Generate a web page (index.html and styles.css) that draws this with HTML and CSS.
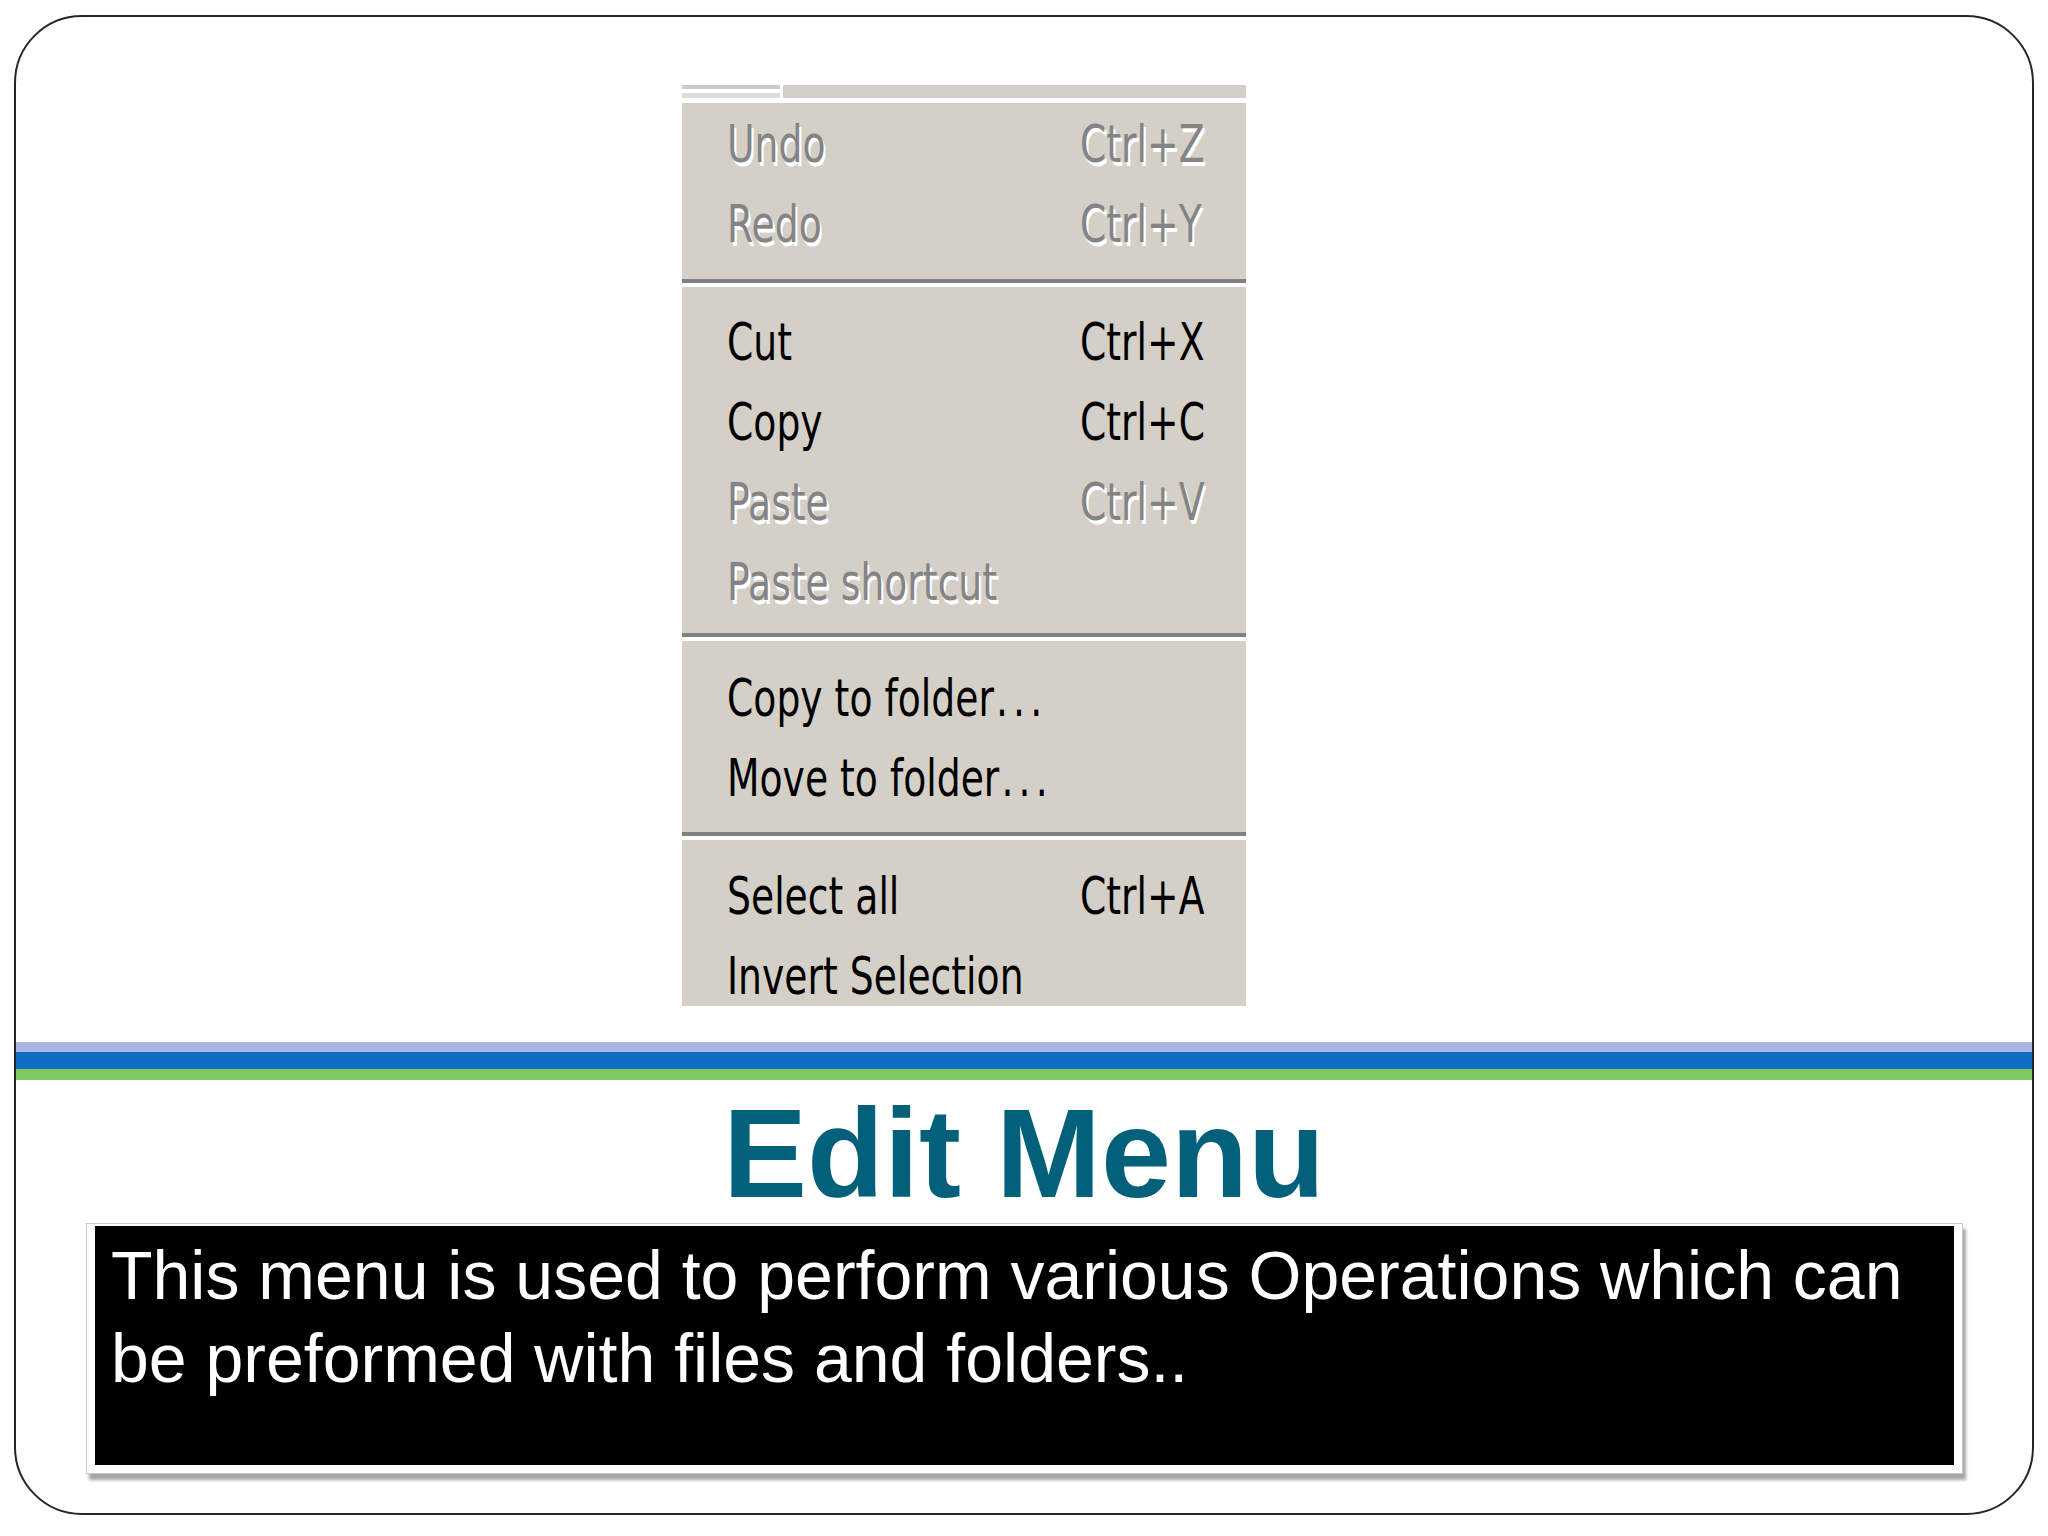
FILE: index.html
```html
<!DOCTYPE html>
<html lang="en">
<head>
<meta charset="utf-8">
<title>Edit Menu</title>
<link rel="stylesheet" href="styles.css">
</head>
<body>
<div class="slide">
  <div class="menu">
    <div class="menubar"><div class="menubar-tab"></div></div>
    <div class="group g1">
      <div class="row disabled"><span class="lbl">Undo</span><span class="key">Ctrl+Z</span></div>
      <div class="row disabled"><span class="lbl">Redo</span><span class="key">Ctrl+Y</span></div>
    </div>
    <div class="sep"></div>
    <div class="group g2">
      <div class="row"><span class="lbl">Cut</span><span class="key">Ctrl+X</span></div>
      <div class="row"><span class="lbl">Copy</span><span class="key">Ctrl+C</span></div>
      <div class="row disabled"><span class="lbl">Paste</span><span class="key">Ctrl+V</span></div>
      <div class="row disabled"><span class="lbl">Paste shortcut</span><span class="key"></span></div>
    </div>
    <div class="sep"></div>
    <div class="group g3">
      <div class="row"><span class="lbl">Copy to folder<span class="dots">...</span></span><span class="key"></span></div>
      <div class="row"><span class="lbl">Move to folder<span class="dots">...</span></span><span class="key"></span></div>
    </div>
    <div class="sep"></div>
    <div class="group g4">
      <div class="row"><span class="lbl">Select all</span><span class="key">Ctrl+A</span></div>
      <div class="row"><span class="lbl">Invert Selection</span><span class="key"></span></div>
    </div>
  </div>
  <div class="stripes">
    <div class="stripe s1"></div>
    <div class="stripe s2"></div>
    <div class="stripe s3"></div>
  </div>
  <h1 class="title">Edit Menu</h1>
  <div class="frame">
    <div class="box">This menu is used to perform various Operations which can be preformed with files and folders..</div>
  </div>
</div>
</body>
</html>
```

FILE: styles.css
```css
html, body {
  margin: 0;
  padding: 0;
  background: #ffffff;
}

body {
  width: 2048px;
  height: 1536px;
  overflow: hidden;
  font-family: "Liberation Sans", Arial, sans-serif;
}

.slide {
  box-sizing: border-box;
  width: 2020px;
  height: 1500px;
  margin: 15px 0 0 14px;
  border: 2px solid #262626;
  border-radius: 68px;
  overflow: hidden;
  display: flex;
  flex-direction: column;
  background: #ffffff;
}

/* ---------- Windows-style menu ---------- */
.menu {
  width: 564px;
  margin: 68px 0 0 666px;
  background: #d4d0c8;
  font-family: "DejaVu Sans", "Liberation Sans", sans-serif;
  font-size: 52px;
}

.menubar {
  height: 13px;
  background: #d4d0c8;
  border-bottom: 5px solid #ffffff;
  display: flex;
}

.menubar-tab {
  width: 98px;
  height: 13px;
  border-right: 3px solid #ffffff;
  background: linear-gradient(to bottom,
    #cbcbcb 0, #cbcbcb 4px,
    #ffffff 4px, #ffffff 8px,
    #dcdcdc 8px, #dcdcdc 13px);
}

.group {
  box-sizing: border-box;
  padding-left: 45px;
  overflow: hidden;
}

.g1 { padding-top: 1px; padding-bottom: 15px; }
.g2 { padding-top: 15px; padding-bottom: 11px; }
.g3 { padding-top: 17px; padding-bottom: 14px; }
.g4 { padding-top: 16px; height: 166px; }

.row {
  display: grid;
  grid-template-columns: 353px 1fr;
  height: 80px;
  line-height: 80px;
  color: #000000;
  white-space: nowrap;
}

.lbl, .key {
  display: inline-block;
  transform: scaleX(0.725);
  transform-origin: left center;
}

.dots {
  margin-left: 3px;
  letter-spacing: 7px;
}

.row.disabled {
  color: #848484;
  text-shadow: 3px 4px 0 #ffffff;
}

.sep {
  height: 0;
  border-top: 4px solid #808080;
  border-bottom: 4px solid #ffffff;
}

/* ---------- stripes ---------- */
.stripes {
  margin-top: 36px;
  display: flex;
  flex-direction: column;
}

.stripe { height: 10px; }
.s1 { background: #abb5e1; height: 10px; }
.s2 { background: #0f6dc6; height: 17px; }
.s3 { background: #7dc95f; height: 11px; }

/* ---------- title ---------- */
.title {
  margin: 5px 0 0 0;
  font-family: "Liberation Sans", Arial, sans-serif;
  font-weight: bold;
  font-size: 126px;
  line-height: 138px;
  height: 138px;
  text-align: center;
  color: #03607a;
}

/* ---------- text box ---------- */
.frame {
  box-sizing: border-box;
  width: 1877px;
  margin-left: 70px;
  padding: 2px 8px 8px 8px;
  background: #ffffff;
  border: 1px solid #c9c9c9;
  box-shadow: 3px 6px 3px rgba(0, 0, 0, 0.35);
}

.box {
  box-sizing: border-box;
  height: 239px;
  background: #000000;
  color: #ffffff;
  padding: 8px 0 0 16px;
  font-family: "Liberation Sans", Arial, sans-serif;
  font-size: 68px;
  line-height: 83px;
}
```
